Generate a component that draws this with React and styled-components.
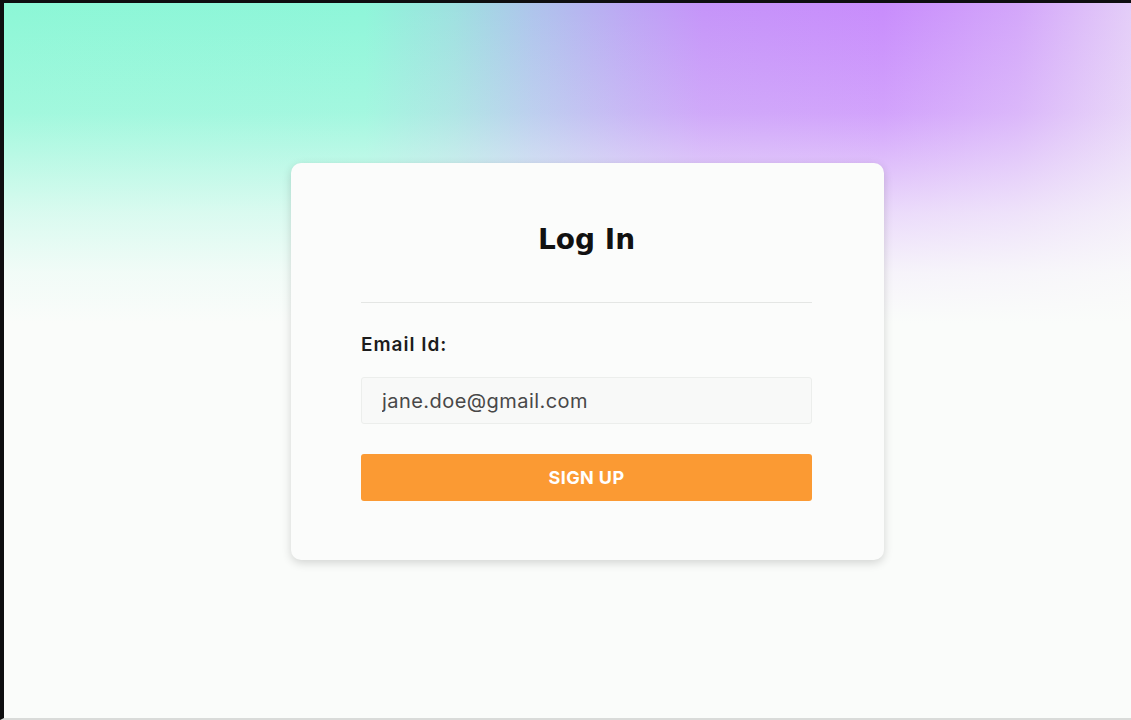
import React from 'react';
import styled, { createGlobalStyle } from 'styled-components';

const GlobalStyle = createGlobalStyle`
  * {
    box-sizing: border-box;
  }
  body {
    margin: 0;
    font-family: Inter, "Liberation Sans", sans-serif;
    background: #111;
  }
`;

const Frame = styled.div`
  height: 720px;
  border-top: 3px solid #0e0e10;
  border-left: 4px solid #0e0e10;
  border-bottom: 2px solid #d9dbd9;
  display: flex;
  justify-content: center;
  align-items: flex-start;
  padding: 160px 0 0 40px;
  background:
    linear-gradient(to bottom, rgba(250, 252, 250, 0) 0px, rgba(250, 252, 250, 0.2) 110px, rgba(250, 252, 250, 0.7) 210px, rgba(250, 252, 250, 0.92) 270px, #fafcfa 320px),
    linear-gradient(
      to right,
      #8cf7d6 0%,
      #8ef6d9 32%,
      #9ee0e0 40%,
      #aec4ec 47%,
      #bca8f4 55%,
      #c594f9 62%,
      #c88cfc 78%,
      #d3a6fa 90%,
      #e4cdf8 100%
    );
`;

const Card = styled.div`
  width: 593px;
  background: #fbfcfb;
  border-radius: 10px;
  box-shadow: 0 3px 10px rgba(0, 0, 0, 0.16);
  padding: 59px 72px 59px 70px;
  display: flex;
  flex-direction: column;
`;

const Title = styled.h1`
  margin: 0;
  text-align: center;
  font-family: "DejaVu Sans", Inter, sans-serif;
  font-size: 28px;
  line-height: 36px;
  font-weight: 700;
  color: #111;
`;

const Divider = styled.hr`
  margin: 44px 0 0;
  border: 0;
  height: 1px;
  background: #e4e6e4;
`;

const Label = styled.label`
  margin-top: 30px;
  font-size: 19px;
  line-height: 24px;
  font-weight: 600;
  letter-spacing: 1px;
  color: #1c1c1c;
`;

const Input = styled.input`
  margin-top: 20px;
  height: 47px;
  width: 100%;
  padding: 0 20px;
  border: 1px solid #eceeec;
  border-radius: 3px;
  background: #f8f9f8;
  font-family: Inter, "Liberation Sans", sans-serif;
  font-size: 20px;
  letter-spacing: 0.45px;
  color: #484848;
  outline: none;
`;

const Button = styled.button`
  margin-top: 30px;
  height: 47px;
  width: 100%;
  border: 0;
  border-radius: 3px;
  background: #fb9a33;
  color: #fff;
  font-family: Inter, "Liberation Sans", sans-serif;
  font-size: 18px;
  font-weight: 700;
  letter-spacing: 0.4px;
  cursor: pointer;
`;

export default function App() {
  return (
    <>
      <GlobalStyle />
      <Frame>
        <Card>
          <Title>Log In</Title>
          <Divider />
          <Label htmlFor="email">Email Id:</Label>
          <Input id="email" type="email" defaultValue="jane.doe@gmail.com" />
          <Button type="button">SIGN UP</Button>
        </Card>
      </Frame>
    </>
  );
}
